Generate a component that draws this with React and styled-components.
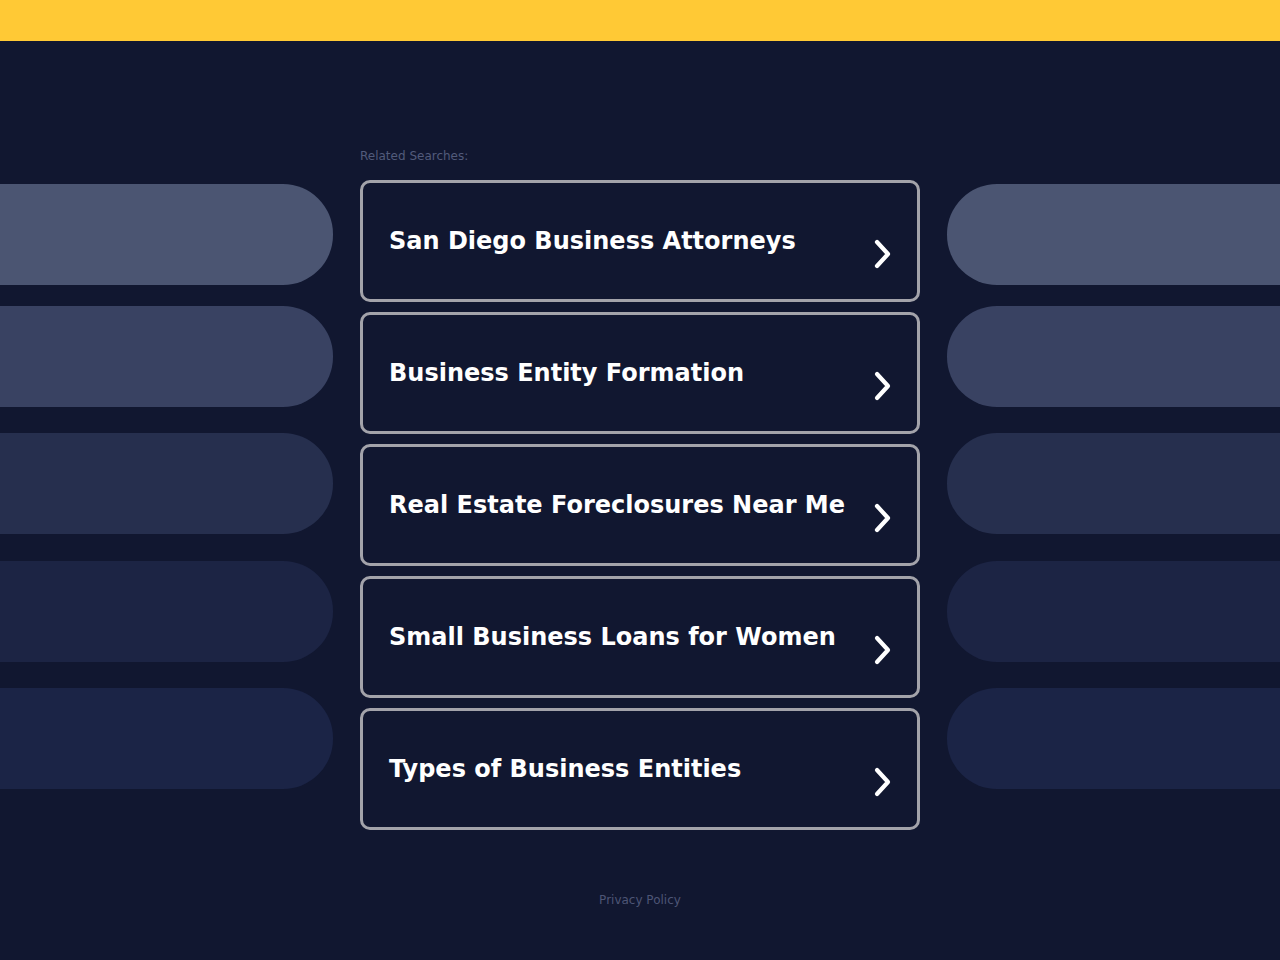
import React from "react";
import styled, { createGlobalStyle } from "styled-components";

const GlobalStyle = createGlobalStyle`
  html, body {
    margin: 0;
    padding: 0;
    background: #111730;
    font-family: "DejaVu Sans", "Noto Sans", sans-serif;
  }
`;

const Page = styled.div`
  min-height: 960px;
  background: #111730;
`;

const TopBar = styled.div`
  height: 41px;
  background: #ffc935;
`;

const Layout = styled.div`
  display: grid;
  grid-template-columns: 333px 560px 333px;
  column-gap: 27px;
  padding-top: 106px;
`;

const SideColumn = styled.div`
  display: flex;
  flex-direction: column;
  padding-top: 37px;
`;

const Pill = styled.div`
  height: 101px;
  margin-top: ${(p) => p.$gap}px;
  background: ${(p) => p.$color};
  border-radius: ${(p) => (p.$side === "left" ? "0 50px 50px 0" : "50px 0 0 50px")};
`;

const Center = styled.div`
  display: flex;
  flex-direction: column;
`;

const Label = styled.div`
  font-family: "DejaVu Sans", sans-serif;
  font-size: 12px;
  color: #525b7b;
  height: 17px;
  line-height: 17px;
  margin-top: 1px;
  margin-bottom: 15px;
`;

const List = styled.div`
  display: flex;
  flex-direction: column;
  gap: 10px;
`;

const Card = styled.a`
  box-sizing: border-box;
  height: 122px;
  border: 3px solid #a3a3aa;
  border-radius: 10px;
  display: flex;
  align-items: flex-start;
  justify-content: space-between;
  padding: 44px 23px 0 26px;
  text-decoration: none;
  cursor: pointer;
`;

const CardText = styled.span`
  color: #ffffff;
  font-size: 24px;
  font-weight: bold;
  line-height: 28px;
  white-space: nowrap;
`;

const Chevron = styled.svg`
  width: 22px;
  height: 30px;
  margin-top: 12px;
  flex: none;
`;

const Footer = styled.div`
  text-align: center;
  font-family: "DejaVu Sans", sans-serif;
  font-size: 12px;
  color: #4d5575;
  margin-top: 63px;
`;

const pills = [
  { color: "#4b5572", gap: 0 },
  { color: "#394262", gap: 21 },
  { color: "#262f4e", gap: 26 },
  { color: "#1c2444", gap: 27 },
  { color: "#1b2446", gap: 26 },
];

const searches = [
  "San Diego Business Attorneys",
  "Business Entity Formation",
  "Real Estate Foreclosures Near Me",
  "Small Business Loans for Women",
  "Types of Business Entities",
];

const Side = ({ side }) => (
  <SideColumn>
    {pills.map((p, i) => (
      <Pill key={i} $color={p.color} $gap={p.gap} $side={side} />
    ))}
  </SideColumn>
);

const App = () => {
  return (
    <Page>
      <GlobalStyle />
      <TopBar />
      <Layout>
        <Side side="left" />
        <Center>
          <Label>Related Searches:</Label>
          <List>
            {searches.map((s) => (
              <Card key={s}>
                <CardText>{s}</CardText>
                <Chevron viewBox="0 0 22 30">
                  <polyline
                    points="5,3 16,15 5,27"
                    fill="none"
                    stroke="#ffffff"
                    strokeWidth="4.2"
                    strokeLinecap="round"
                    strokeLinejoin="round"
                  />
                </Chevron>
              </Card>
            ))}
          </List>
          <Footer>Privacy Policy</Footer>
        </Center>
        <Side side="right" />
      </Layout>
    </Page>
  );
};

export default App;
